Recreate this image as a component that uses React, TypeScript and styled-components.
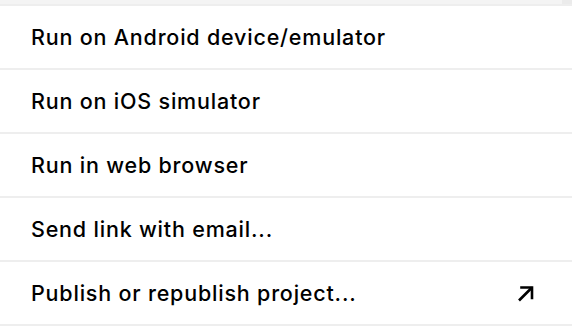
import styled, { createGlobalStyle } from "styled-components"

const GlobalStyle = createGlobalStyle`
    html, body {
        margin: 0;
        padding: 0;
        background: #ffffff;
    }
    body {
        font-family: Inter, "Noto Sans", "Liberation Sans", sans-serif;
        color: #000000;
    }
`

const colors = {
    strip: "#f4f4f4",
    scroll: "#ebebeb",
    line: "#eeeeee",
    text: "#000000",
}

const Page = styled.div`
    width: 572px;
    height: 336px;
    overflow: hidden;
    display: flex;
    flex-direction: column;
`

const TopStrip = styled.div`
    height: 4px;
    display: flex;
    border-bottom: 2px solid ${colors.line};
`

const StripFill = styled.div`
    flex: 1;
    background-color: ${colors.strip};
`

const ScrollTrack = styled.div`
    width: 10px;
    background-color: ${colors.scroll};
`

const Menu = styled.ul`
    list-style: none;
    margin: 0;
    padding: 0;
`

const Item = styled.li`
    height: 62px;
    display: flex;
    align-items: center;
    justify-content: space-between;
    padding: 0 38px 0 31px;
    border-bottom: 2px solid ${colors.line};
    cursor: pointer;
`

const Label = styled.span`
    font-size: 21.5px;
    font-weight: 500;
    letter-spacing: 0.8px;
    color: ${colors.text};
    margin-top: -1px;
`

const ArrowIcon = () => (
    <svg width="17" height="17" viewBox="0 0 17 17" fill="none">
        <path d="M2 15.5 L15 2.5" stroke="#000" strokeWidth="2.6" />
        <path d="M4.5 2.5 H15 V13" stroke="#000" strokeWidth="2.6" strokeLinecap="square" />
    </svg>
)

const items = [
    { label: "Run on Android device/emulator" },
    { label: "Run on iOS simulator" },
    { label: "Run in web browser" },
    { label: "Send link with email..." },
    { label: "Publish or republish project...", external: true },
]

export default function App() {
    return (
        <>
            <GlobalStyle />
            <Page>
                <TopStrip>
                    <StripFill />
                    <ScrollTrack />
                </TopStrip>
                <Menu>
                    {items.map((item) => (
                        <Item key={item.label}>
                            <Label>{item.label}</Label>
                            {item.external && <ArrowIcon />}
                        </Item>
                    ))}
                </Menu>
            </Page>
        </>
    )
}
